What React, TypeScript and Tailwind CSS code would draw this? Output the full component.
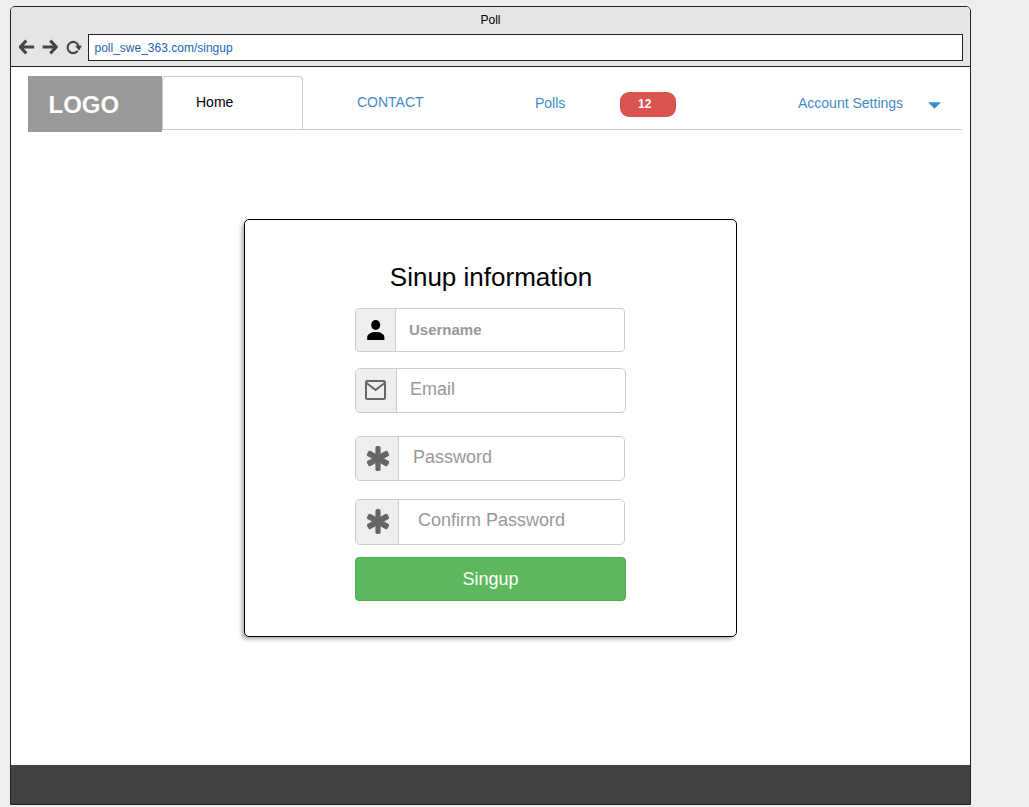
import type { ReactNode } from "react";

function PersonIcon() {
  return (
    <svg width="18" height="20" viewBox="0 0 18 20" fill="#000">
      <ellipse cx="8.7" cy="5" rx="4.5" ry="5" />
      <path d="M0.2 20V17.4C0.2 14 4.4 12 8.8 12s8.6 2 8.6 5.4V20z" />
    </svg>
  );
}

function MailIcon() {
  return (
    <svg width="21" height="20" viewBox="0 0 21 20" fill="none" stroke="#666" strokeWidth="2">
      <rect x="1" y="1" width="19" height="18" rx="1.3" />
      <path d="M1.5 3l9 7 9-7" />
    </svg>
  );
}

function AsteriskIcon() {
  return (
    <svg width="22" height="25" viewBox="0 0 22 25" fill="#666">
      <rect x="8.4" y="0" width="5.2" height="25" rx="1.8" />
      <rect x="8.1" y="0.7" width="5.8" height="23.6" rx="1.8" transform="rotate(61 11 12.5)" />
      <rect x="8.1" y="0.7" width="5.8" height="23.6" rx="1.8" transform="rotate(-61 11 12.5)" />
    </svg>
  );
}

function BrowserIcons() {
  return (
    <svg className="shrink-0" width="64" height="18" viewBox="0 0 64 18" fill="none" stroke="#444" strokeWidth="3">
      <path d="M7.3 2.6L1.2 9l6.1 6.4M1.6 9h13.6" strokeLinejoin="round" />
      <path d="M31.3 2.6L37.4 9l-6.1 6.4M37 9H23.6" strokeLinejoin="round" />
      <path d="M58.7 12.9A5.6 5.6 0 1 1 59.6 8" strokeWidth="2.1" />
      <path d="M56.2 7.7h6.7l-2.9 5z" fill="#444" stroke="none" />
    </svg>
  );
}

function Field({ icon, label, box, addon, text }: { icon: ReactNode; label: string; box: string; addon: string; text: string }) {
  return (
    <div className={`flex overflow-hidden border border-[#ccc] bg-white ${box}`}>
      <div className={`flex shrink-0 items-center justify-center border-r border-[#ccc] bg-[#eee] ${addon}`}>{icon}</div>
      <span className={`whitespace-nowrap text-[#999] ${text}`}>{label}</span>
    </div>
  );
}

export default function App() {
  return (
    <div className="h-[807px] w-[1029px] overflow-hidden bg-[#eee] pl-[10px] pt-[6px] font-['Liberation_Sans',Arial,sans-serif]">
      <div className="flex h-[799px] w-[961px] flex-col overflow-hidden rounded-t-[5px] border border-[#222] bg-white">
        <header className="h-[60px] shrink-0 border-b border-[#222] bg-[#e5e5e5]">
          <div className="h-[27px] text-center text-[12px] leading-[26px] text-black">Poll</div>
          <div className="flex pl-[8px]">
            <div className="mt-[4px] w-[69px]">
              <BrowserIcons />
            </div>
            <div className="h-[27px] w-[875px] border border-[#222] bg-white pl-[5.5px] text-[12px] leading-[26px] text-[#1a66bb]">
              poll_swe_363.com/singup
            </div>
          </div>
        </header>

        <nav className="ml-[17px] mt-[9px] flex h-[56px] w-[934px] shrink-0 text-[14px] leading-[16px] text-[#428bca]">
          <div className="w-[134px] bg-[#999] pl-[20.5px] pt-[15px] text-[24px] font-bold leading-[28px] text-white">LOGO</div>
          <div className="flex h-[54px] flex-1 border-b border-[#ccc]">
            <div className="h-[53px] w-[141px] rounded-t-[4px] border border-b-0 border-[#ccc] pl-[33px] pt-[17px] text-black">Home</div>
            <a className="w-[178px] pl-[54px] pt-[18px]">CONTACT</a>
            <a className="w-[139px] pl-[54px] pt-[19px]">Polls</a>
            <div className="mt-[16px] h-[25px] w-[56px] rounded-[9px] bg-[#d9534f] pl-[18px] text-[12px] font-bold leading-[24px] text-white">12</div>
            <div className="flex pl-[122px] pt-[19px]">
              <span className="w-[130px] whitespace-nowrap">Account Settings</span>
              <svg className="mt-[7px]" width="13" height="7" viewBox="0 0 13 7" fill="#428bca">
                <path d="M0 0.2h13L6.5 6.8z" />
              </svg>
            </div>
          </div>
        </nav>

        <main className="flex-1 pl-[233px] pt-[87px]">
          <form className="flex h-[418px] w-[493px] flex-col rounded-[5px] border border-black bg-white pl-[110px] shadow-[-3px_3px_4px_-1px_rgba(0,0,0,0.35)]">
            <h1 className="mt-[42px] h-[46px] w-[272px] text-center text-[26px] leading-[30px] text-black">Sinup information</h1>
            <Field icon={<PersonIcon />} label="Username" box="h-[44px] w-[270px] rounded-[4px]" addon="w-[40px]" text="pl-[13px] pt-[12px] text-[15px] font-bold leading-[18px]" />
            <Field icon={<MailIcon />} label="Email" box="mt-[16px] h-[45px] w-[271px] rounded-[5px]" addon="w-[41px] pb-[1px] pr-[1px]" text="pl-[13px] pt-[10px] text-[18px] leading-[21px]" />
            <Field icon={<AsteriskIcon />} label="Password" box="mt-[23px] h-[45px] w-[270px] rounded-[5px]" addon="w-[43px] pl-[1px]" text="pl-[14px] pt-[10px] text-[18px] leading-[21px]" />
            <Field icon={<AsteriskIcon />} label="Confirm Password" box="mt-[18px] h-[46px] w-[270px] rounded-[5px]" addon="w-[43px] pb-[1px] pl-[1px]" text="pl-[19px] pt-[10px] text-[18px] leading-[21px]" />
            <button type="button" className="mt-[12px] h-[44px] w-[271px] rounded-[4px] border border-[#4cae4c] bg-[#5cb85c] text-[18px] leading-[42px] text-white">
              Singup
            </button>
          </form>
        </main>
        <footer className="h-[39px] shrink-0 bg-[#424242]" />
      </div>
    </div>
  );
}
